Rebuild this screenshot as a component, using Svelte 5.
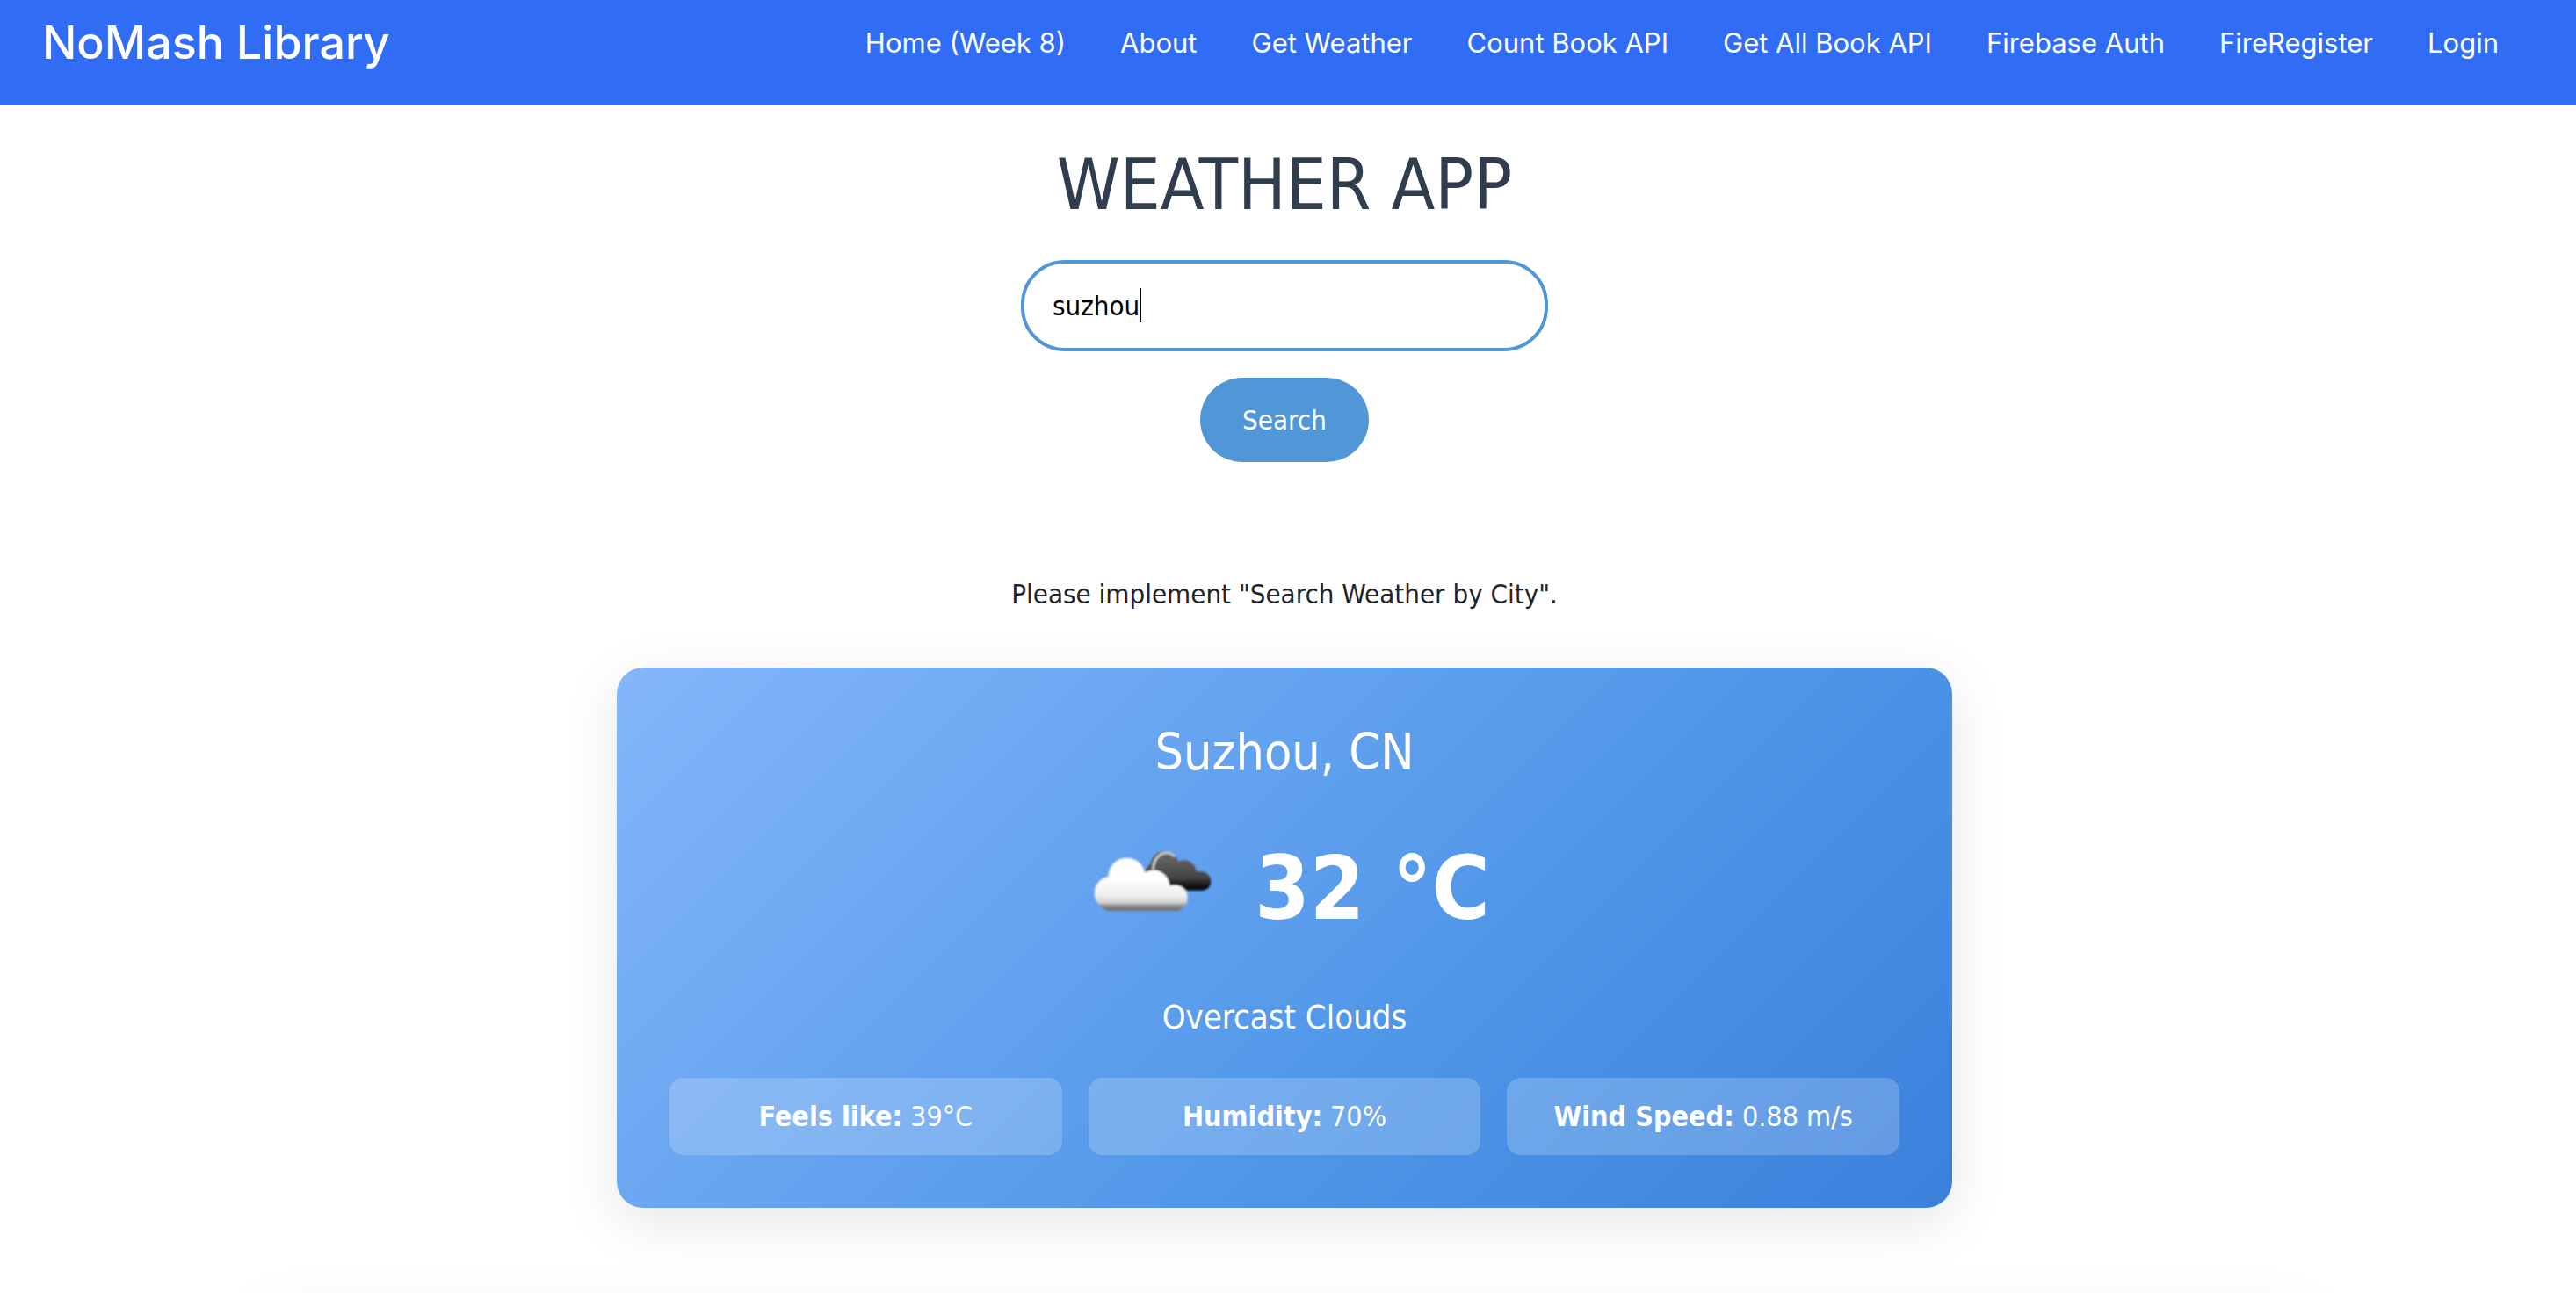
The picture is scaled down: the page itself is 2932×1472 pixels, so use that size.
<script lang="ts">
  const links = [
    'Home (Week 8)',
    'About',
    'Get Weather',
    'Count Book API',
    'Get All Book API',
    'Firebase Auth',
    'FireRegister',
    'Login',
  ];

  const details = [
    { label: 'Feels like:', value: '39°C' },
    { label: 'Humidity:', value: '70%' },
    { label: 'Wind Speed:', value: '0.88 m/s' },
  ];

  let city = $state('suzhou');
</script>

<div class="page">
  <header class="navbar">
    <a class="brand" href="#home">NoMash Library</a>
    <nav>
      {#each links as link}
        <a href="#{link}">{link}</a>
      {/each}
    </nav>
  </header>

  <main>
    <h1>WEATHER APP</h1>

    <form class="search" onsubmit={(e) => e.preventDefault()}>
      <div class="field">
        <input type="text" aria-label="City" bind:value={city} />
        <span class="caret"></span>
      </div>
      <button type="submit">Search</button>
    </form>

    <p class="note">Please implement "Search Weather by City".</p>

    <section class="card">
      <h2>Suzhou, CN</h2>
      <div class="reading">
        <svg class="icon" viewBox="0 0 600 600" aria-hidden="true">
          <defs>
            <linearGradient id="dark" x1="0" y1="0" x2="0" y2="1">
              <stop offset="0" stop-color="#6a6a6a" />
              <stop offset="0.35" stop-color="#585858" />
              <stop offset="0.68" stop-color="#434343" />
              <stop offset="0.85" stop-color="#181818" />
              <stop offset="1" stop-color="#050505" />
            </linearGradient>
            <linearGradient id="light" x1="0" y1="0" x2="0" y2="1">
              <stop offset="0" stop-color="#ffffff" />
              <stop offset="0.42" stop-color="#fdfdfd" />
              <stop offset="0.7" stop-color="#efefef" />
              <stop offset="0.84" stop-color="#d2d2d2" />
              <stop offset="0.91" stop-color="#8a8a8a" />
              <stop offset="1" stop-color="#6c6c6c" />
            </linearGradient>
            <filter id="soft"><feGaussianBlur stdDeviation="2.5" /></filter>
          </defs>
          <g transform="translate(21 84)" filter="url(#soft)">
            <path
              d="M250 158 Q262 138 272 128 C276 102 298 86 322 87 C344 88 360 102 367 122 C394 110 424 126 428 157 C454 152 478 166 478 190 C478 208 466 221 446 221 H300 Z"
              fill="url(#dark)"
            />
            <path d="M281 150 C280 118 300 94 328 92 Q344 94 354 106" fill="none" stroke="#c9c9c9" stroke-width="8" />
            <path
              d="M130 291 C102 284 80 258 80 230 C80 203 100 179 127 174 C128 138 154 110 190 110 C222 110 246 130 252 160 C292 138 334 164 337 205 C368 195 398 214 398 245 C398 270 384 285 364 291 Z"
              fill="url(#light)"
            />
          </g>
        </svg>
        <span class="temp">32 °C</span>
      </div>
      <p class="summary">Overcast Clouds</p>
      <div class="details">
        {#each details as item}
          <div class="detail"><strong>{item.label}</strong> {item.value}</div>
        {/each}
      </div>
    </section>

    <section class="panel"></section>
  </main>
</div>

<style>
  :global(body) {
    margin: 0;
    background: #fff;
  }

  .page {
    height: 100vh;
    overflow: hidden;
    font-family: 'DejaVu Sans Condensed', 'DejaVu Sans', sans-serif;
    font-size: 31px;
    line-height: 48px;
    color: #212529;
  }

  .navbar {
    display: flex;
    justify-content: space-between;
    align-items: flex-start;
    box-sizing: border-box;
    height: 120px;
    padding: 0 88px 0 48px;
    background: #316cf4;
    font-family: Inter, sans-serif;
    line-height: 98px;
    white-space: nowrap;
  }

  .navbar a {
    color: #fff;
    text-decoration: none;
  }

  .brand {
    font-size: 52px;
    font-weight: 500;
  }

  nav {
    display: flex;
    gap: 62px;
    font-size: 31px;
  }

  main {
    display: flex;
    flex-direction: column;
    align-items: center;
    padding: 42px 8px 0 0;
  }

  h1 {
    margin: 0 0 38px;
    font-size: 81px;
    font-weight: 400;
    line-height: 96px;
    color: #2f3d4f;
  }

  .search {
    display: flex;
    flex-direction: column;
    align-items: center;
    gap: 30px;
  }

  .field {
    position: relative;
  }

  input {
    display: block;
    box-sizing: border-box;
    width: 600px;
    height: 104px;
    padding: 0 32px;
    border: 4px solid #5196d7;
    border-radius: 50px;
    outline: none;
    background: #fff;
    font: inherit;
    color: #000;
  }

  .caret {
    position: absolute;
    top: 32px;
    left: 135px;
    width: 2px;
    height: 39px;
    background: #000;
  }

  button {
    height: 96px;
    padding: 0 48px;
    border: 0;
    border-radius: 50px;
    background: #5196d7;
    font: inherit;
    color: #fff;
  }

  .note {
    margin: 126px 0 60px;
  }

  .card {
    box-sizing: border-box;
    width: 100%;
    max-width: 1520px;
    padding: 60px;
    border-radius: 30px;
    background: linear-gradient(135deg, #84b6fa 0%, #4f96e8 62%, #3b80dc 100%);
    box-shadow: 0 16px 64px rgba(0, 0, 0, 0.1);
    text-align: center;
    color: #fff;
  }

  h2 {
    margin: 0 0 20px;
    font-size: 57px;
    font-weight: 400;
    line-height: 72px;
  }

  .reading {
    display: flex;
    justify-content: center;
    align-items: center;
    gap: 16px;
    padding-right: 16px;
  }

  .icon {
    width: 200px;
    height: 200px;
  }

  .temp {
    font-size: 100px;
    font-weight: 700;
    line-height: 148px;
  }

  .summary {
    margin: 16px 0 39px;
    font-size: 38px;
    line-height: 60px;
  }

  .details {
    display: grid;
    grid-template-columns: repeat(3, 1fr);
    gap: 30px;
    font-size: 32px;
  }

  .detail {
    padding: 20px;
    border-radius: 16px;
    background: rgba(255, 255, 255, 0.2);
  }

  .panel {
    width: 80%;
    height: 200px;
    margin-top: 136px;
    border-radius: 30px;
    box-shadow: 0 0 80px rgba(0, 0, 0, 0.1);
  }
</style>
